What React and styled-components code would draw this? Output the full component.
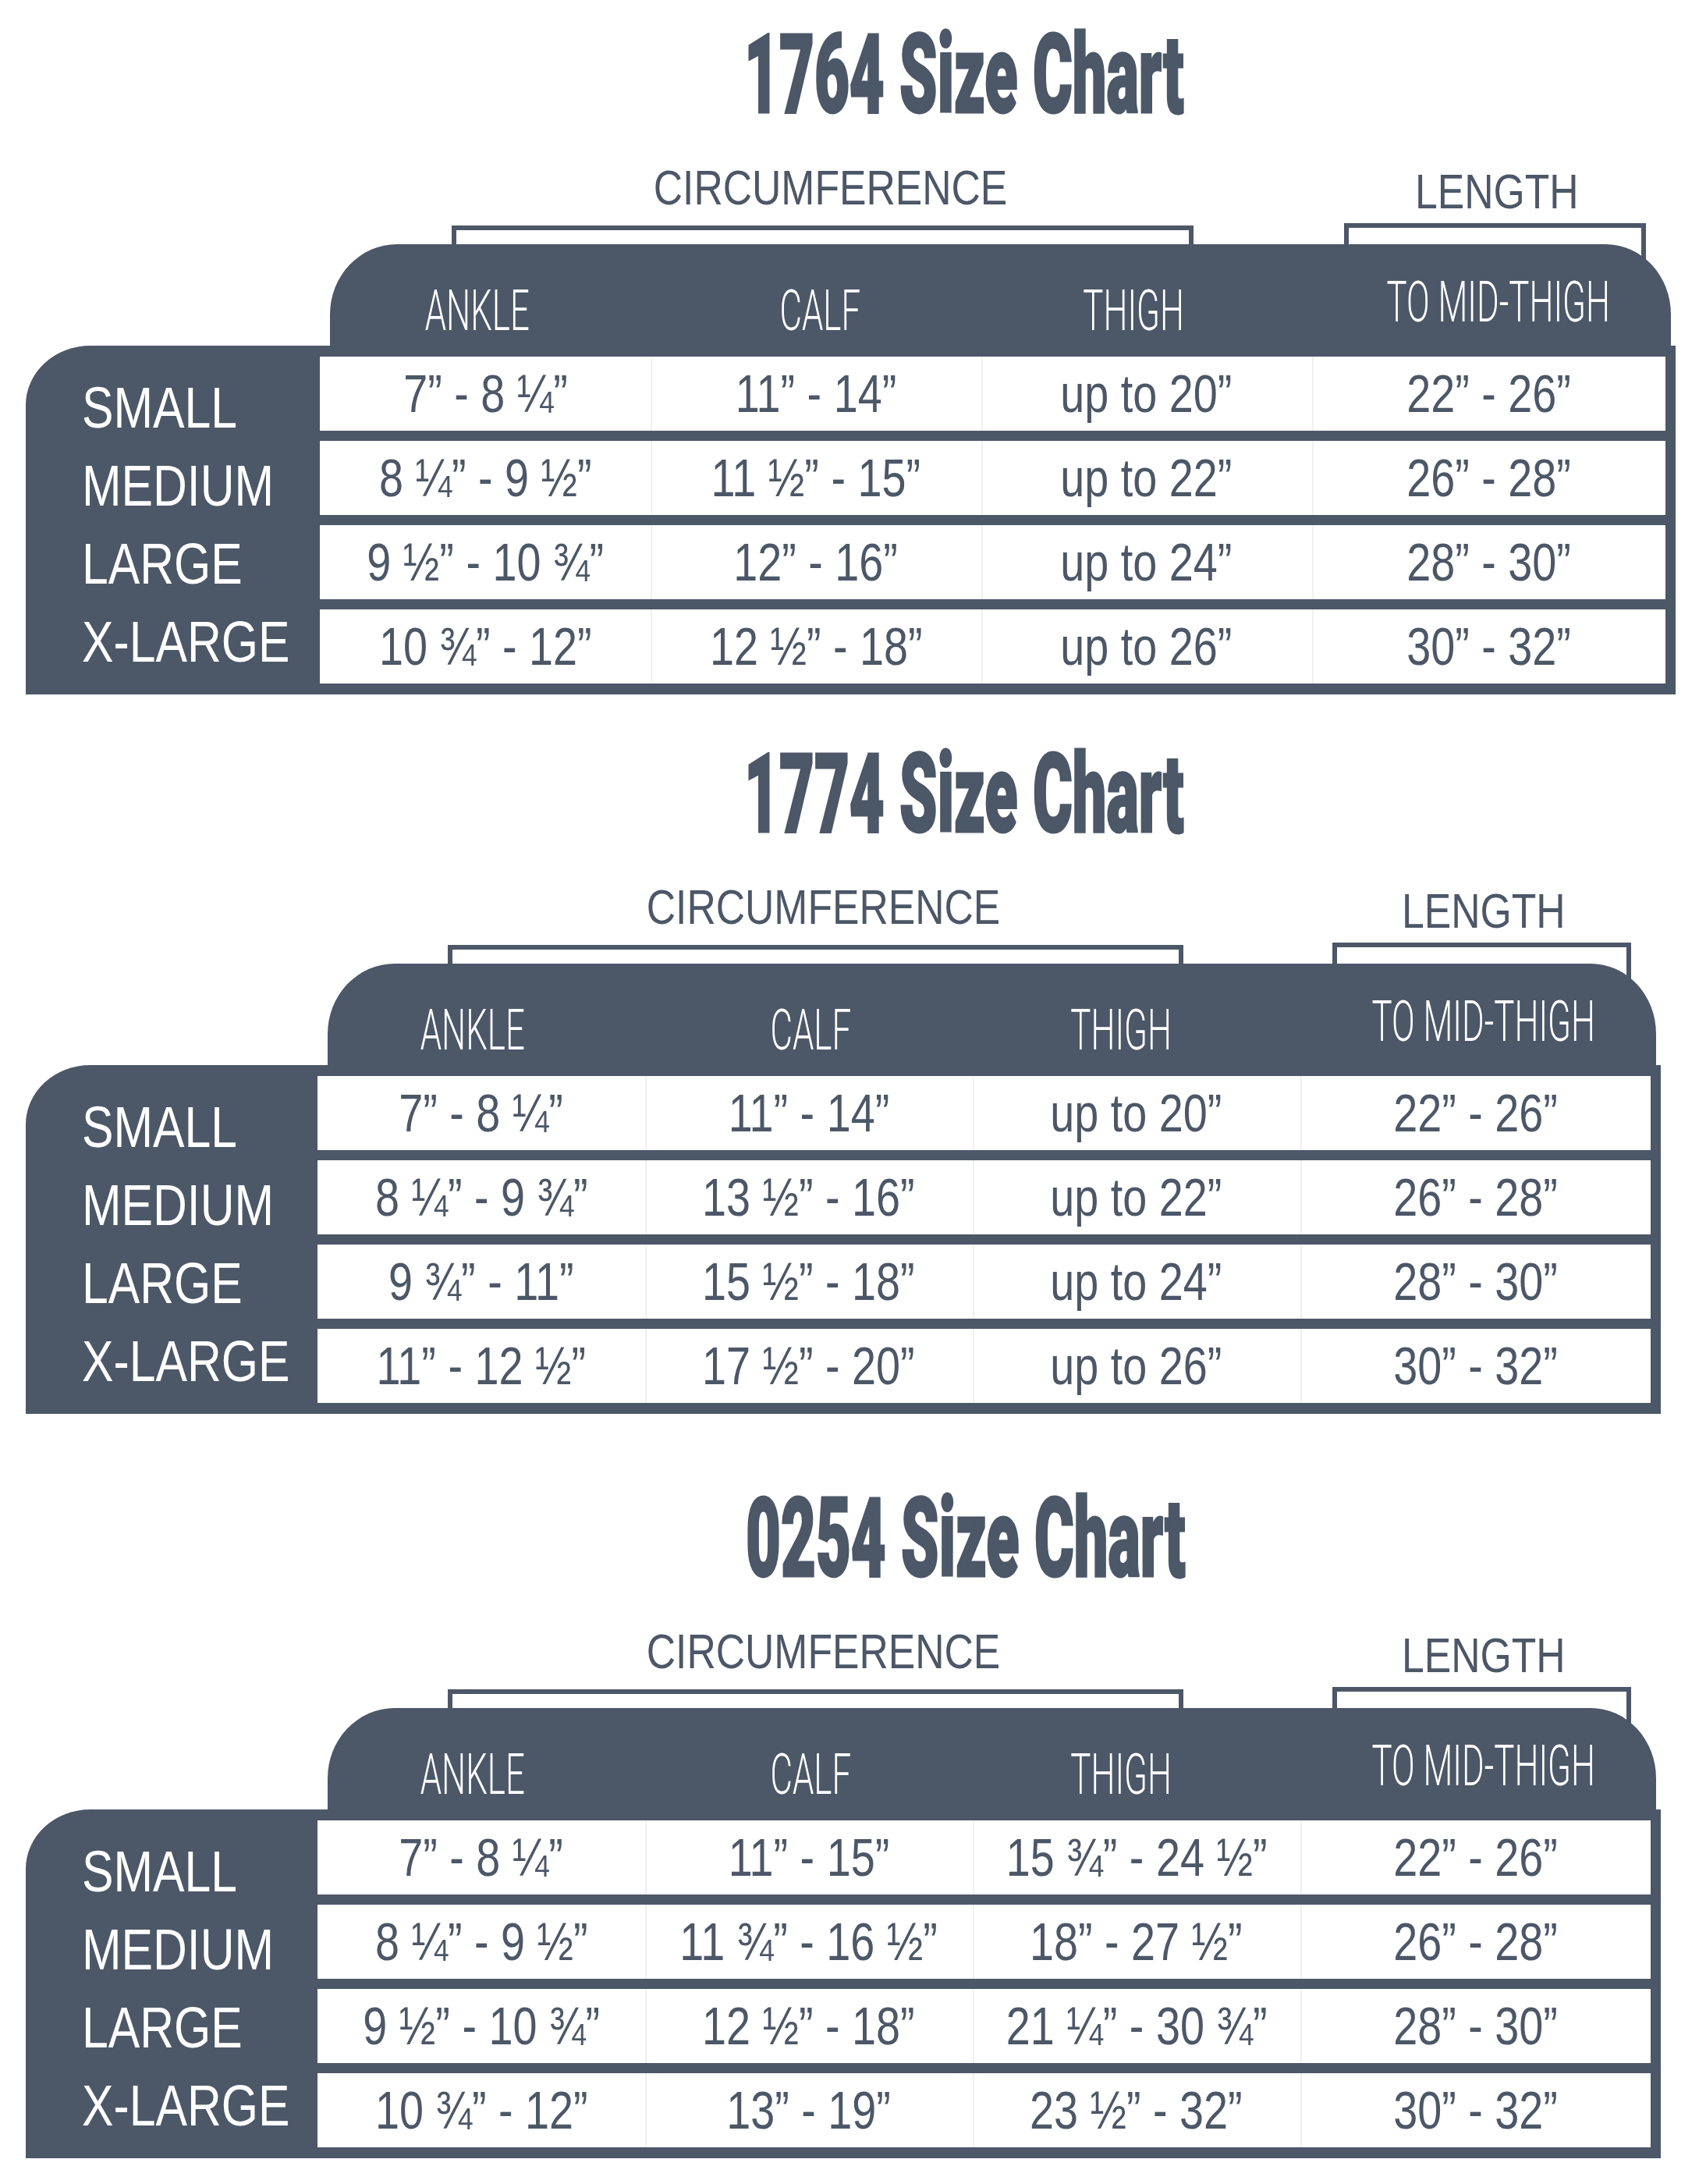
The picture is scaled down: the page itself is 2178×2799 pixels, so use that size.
import React from 'react';
import styled, { createGlobalStyle } from 'styled-components';

const SLATE = '#4c5767';

const GlobalStyle = createGlobalStyle`
  html, body {
    margin: 0;
    padding: 0;
    background: #ffffff;
  }
  body {
    font-family: "Liberation Sans", Arial, sans-serif;
    color: ${SLATE};
  }
`;

const Page = styled.div`
  width: 2178px;
  height: 2799px;
  padding: 0 0 0 33px;
  box-sizing: border-box;
  overflow: hidden;
`;

const Chart = styled.section`
  width: ${(p) => p.$width}px;
  margin-top: ${(p) => p.$top}px;
  display: flex;
  flex-direction: column;
`;

const TitleRow = styled.div`
  height: 141px;
  padding-left: ${(p) => p.$left}px;
`;

const TitleText = styled.h1`
  display: inline-block;
  margin: 0;
  font-family: Roboto, "Liberation Sans", sans-serif;
  font-weight: 900;
  font-size: 141px;
  line-height: 141px;
  color: ${SLATE};
  -webkit-text-stroke: 3px ${SLATE};
  white-space: nowrap;
  transform: scaleX(0.55);
  transform-origin: left center;
`;

/* Arial Narrow is not installed, so the narrow face is Liberation Sans squeezed */
const Narrow = styled.span`
  display: inline-block;
  white-space: nowrap;
  transform: translateX(${(p) => p.$dx || 0}px) scaleX(0.82);
  transform-origin: ${(p) => (p.$left ? 'left center' : 'center')};
`;

const Groups = styled.div`
  display: grid;
  grid-template-columns: 25.8% 45% 9.1% 18.3%;
  align-items: end;
  margin-top: 43px;
`;

const Group = styled.div`
  grid-column: ${(p) => p.$col};
  display: flex;
  flex-direction: column;
  align-items: center;
`;

const GroupText = styled.div`
  font-size: 63px;
  line-height: 63px;
  color: ${SLATE};
`;

const Bracket = styled.div`
  align-self: stretch;
  box-sizing: border-box;
  height: ${(p) => p.$h}px;
  margin-top: ${(p) => p.$gap}px;
  border: 6px solid ${SLATE};
  border-bottom: none;
`;

const Header = styled.div`
  position: relative;
  z-index: 1;
  height: 144px;
  margin: -60px 6px 0 18.45%;
  background: ${SLATE};
  border-radius: 86px 84px 0 0 / 90px 90px 0 0;
  display: grid;
  grid-template-columns: 1fr 1fr 1fr 1.07fr;
  align-items: end;
  padding-bottom: 22px;
  box-sizing: border-box;
`;

const HeadCell = styled.div`
  display: flex;
  justify-content: center;
  transform: translate(${(p) => p.$dx}px, ${(p) => p.$dy}px);
`;

const HeadText = styled.span`
  display: inline-block;
  font-family: Roboto, "Liberation Sans", sans-serif;
  font-weight: 300;
  font-size: 73px;
  line-height: 73px;
  color: #ffffff;
  white-space: nowrap;
  transform: scaleX(0.6);
`;

const Frame = styled.div`
  margin-top: -14px;
  background: ${SLATE};
  border-top-left-radius: 83px 76px;
  display: grid;
  grid-template-columns: 17.95% 1fr;
  padding: 14px 13px 14px 0;
`;

const Sizes = styled.div`
  display: flex;
  flex-direction: column;
  padding: 16px 0 0 72px;
`;

const SizeLabel = styled.div`
  font-size: 74px;
  line-height: 100px;
  color: #ffffff;
`;

const Rows = styled.div`
  display: flex;
  flex-direction: column;
  gap: 13px;
`;

const Row = styled.div`
  height: 95px;
  background: #ffffff;
  display: grid;
  grid-template-columns: 1fr 1fr 1fr 1.07fr;
`;

const Cell = styled.div`
  display: flex;
  align-items: center;
  justify-content: center;
  font-size: 68px;
  line-height: 95px;
  color: ${SLATE};
  & + & {
    box-shadow: inset 2px 0 0 #eef0f2;
  }
`;

const SIZES = ['SMALL', 'MEDIUM', 'LARGE', 'X-LARGE'];

const HEADS = [
  { label: 'ANKLE', dx: -18, dy: 0 },
  { label: 'CALF', dx: 7, dy: 0 },
  { label: 'THIGH', dx: -4, dy: 0 },
  { label: 'TO MID-THIGH', dx: 18, dy: -11 },
];

const CHARTS = [
  {
    id: '1764',
    width: 2115,
    top: 25,
    titleLeft: 921,
    rows: [
      ['7” - 8 ¼”', '11” - 14”', 'up to 20”', '22” - 26”'],
      ['8 ¼” - 9 ½”', '11 ½” - 15”', 'up to 22”', '26” - 28”'],
      ['9 ½” - 10 ¾”', '12” - 16”', 'up to 24”', '28” - 30”'],
      ['10 ¾” - 12”', '12 ½” - 18”', 'up to 26”', '30” - 32”'],
    ],
  },
  {
    id: '1774',
    width: 2096,
    top: 57,
    titleLeft: 921,
    rows: [
      ['7” - 8 ¼”', '11” - 14”', 'up to 20”', '22” - 26”'],
      ['8 ¼” - 9 ¾”', '13 ½” - 16”', 'up to 22”', '26” - 28”'],
      ['9 ¾” - 11”', '15 ½” - 18”', 'up to 24”', '28” - 30”'],
      ['11” - 12 ½”', '17 ½” - 20”', 'up to 26”', '30” - 32”'],
    ],
  },
  {
    id: '0254',
    width: 2096,
    top: 89,
    titleLeft: 923,
    rows: [
      ['7” - 8 ¼”', '11” - 15”', '15 ¾” - 24 ½”', '22” - 26”'],
      ['8 ¼” - 9 ½”', '11 ¾” - 16 ½”', '18” - 27 ½”', '26” - 28”'],
      ['9 ½” - 10 ¾”', '12 ½” - 18”', '21 ¼” - 30 ¾”', '28” - 30”'],
      ['10 ¾” - 12”', '13” - 19”', '23 ½” - 32”', '30” - 32”'],
    ],
  },
];

const SizeChart = ({ chart }) => (
  <Chart $width={chart.width} $top={chart.top}>
    <TitleRow $left={chart.titleLeft}>
      <TitleText>{chart.id} Size Chart</TitleText>
    </TitleRow>

    <Groups>
      <Group $col={2}>
        <GroupText>
          <Narrow $dx={10}>CIRCUMFERENCE</Narrow>
        </GroupText>
        <Bracket $gap={17} $h={84} />
      </Group>
      <Group $col={4}>
        <GroupText>
          <Narrow $dx={2}>LENGTH</Narrow>
        </GroupText>
        <Bracket $gap={9} $h={87} />
      </Group>
    </Groups>

    <Header>
      {HEADS.map((h) => (
        <HeadCell key={h.label} $dx={h.dx} $dy={h.dy}>
          <HeadText>{h.label}</HeadText>
        </HeadCell>
      ))}
    </Header>

    <Frame>
      <Sizes>
        {SIZES.map((s) => (
          <SizeLabel key={s}>
            <Narrow $left>{s}</Narrow>
          </SizeLabel>
        ))}
      </Sizes>
      <Rows>
        {chart.rows.map((row, i) => (
          <Row key={i}>
            {row.map((value, j) => (
              <Cell key={j}>
                <Narrow>{value}</Narrow>
              </Cell>
            ))}
          </Row>
        ))}
      </Rows>
    </Frame>
  </Chart>
);

const App = () => (
  <Page>
    <GlobalStyle />
    {CHARTS.map((chart) => (
      <SizeChart key={chart.id} chart={chart} />
    ))}
  </Page>
);

export default App;
